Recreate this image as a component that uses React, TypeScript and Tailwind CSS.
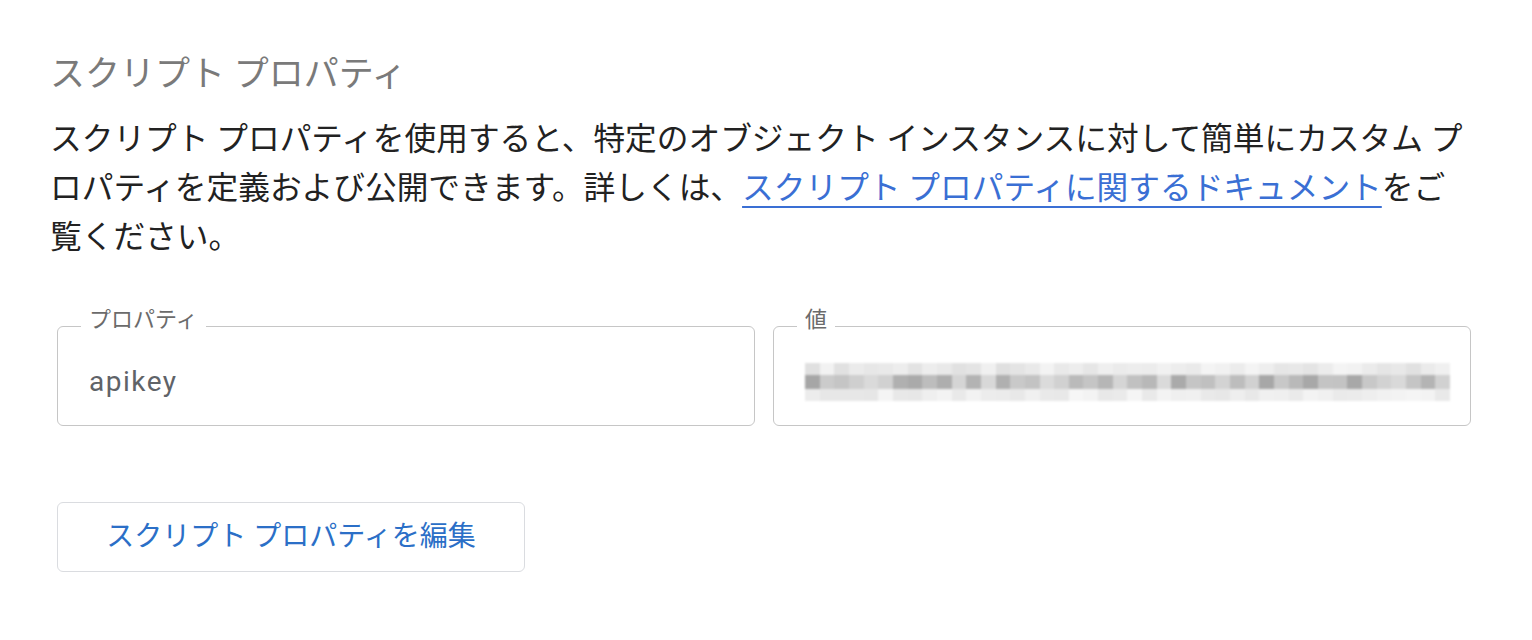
import React from 'react'

const font = { fontFamily: '"Roboto", "Noto Sans CJK JP", sans-serif' }

// pixelated placeholder for the redacted value
const cols = 44
const rows = [
  { h: 'h-[12px]', base: 234, spread: 20 },
  { h: 'h-[14px]', base: 192, spread: 54 },
  { h: 'h-[12px]', base: 238, spread: 16 },
]

function shade(r: number, c: number, base: number, spread: number) {
  const n = Math.abs(Math.sin(r * 91.7 + c * 12.9898) * 43758.5453) % 1
  const v = Math.round(base + (n - 0.5) * spread)
  return `rgb(${v},${v},${v})`
}

function Redacted() {
  return (
    <div className="flex flex-col w-[645px] blur-[1px]">
      {rows.map((row, r) => (
        <div key={r} className={`flex ${row.h}`}>
          {Array.from({ length: cols }).map((_, c) => (
            <div key={c} className="flex-1" style={{ backgroundColor: shade(r, c, row.base, row.spread) }} />
          ))}
        </div>
      ))}
    </div>
  )
}

function Field({ label, children }: { label: string; children: React.ReactNode }) {
  return (
    <fieldset className="min-w-0 border-[1.5px] border-[#c6c6c6] rounded-[6px] h-[118px] -mt-[18px] pl-[31px] pr-[18px]">
      <legend className="-ml-[8px] px-[8px] pb-[12px] text-[22px] leading-[24px] text-[#6b6b6b]">
        {label}
      </legend>
      <div className="h-[80px] -mt-[2px] flex items-center">{children}</div>
    </fieldset>
  )
}

export default function App() {
  return (
    <div className="min-h-[640px] bg-white pl-[50px] pt-[52px]" style={font}>
      <h1 className="text-[35px] leading-[46px] text-[#7a7a7a] font-normal">
        スクリプト プロパティ
      </h1>

      <p className="mt-[17px] text-[31.7px] leading-[49px] text-[#222222]">
        <span className="block whitespace-nowrap">
          スクリプト プロパティを使用すると、特定のオブジェクト インスタンスに対して簡単にカスタム プ
        </span>
        <span className="block whitespace-nowrap">
          ロパティを定義および公開できます。詳しくは、
          <a href="#" className="text-[#3a6fd4] underline decoration-[2px] underline-offset-[7px]">
            スクリプト プロパティに関するドキュメント
          </a>
          をご
        </span>
        <span className="block whitespace-nowrap">覧ください。</span>
      </p>

      <div className="mt-[64px] ml-[7px] w-[1414px] grid grid-cols-2 gap-[18px]">
        <Field label="プロパティ">
          <span className="text-[28px] tracking-[1.5px] text-[#5f6368]">apikey</span>
        </Field>
        <Field label="値">
          <Redacted />
        </Field>
      </div>

      <button className="mt-[76px] ml-[7px] w-[468px] h-[70px] border-[1.5px] border-[#dadce0] rounded-[6px] bg-white text-[28px] text-[#2b6fc7]">
        スクリプト プロパティを編集
      </button>
    </div>
  )
}
